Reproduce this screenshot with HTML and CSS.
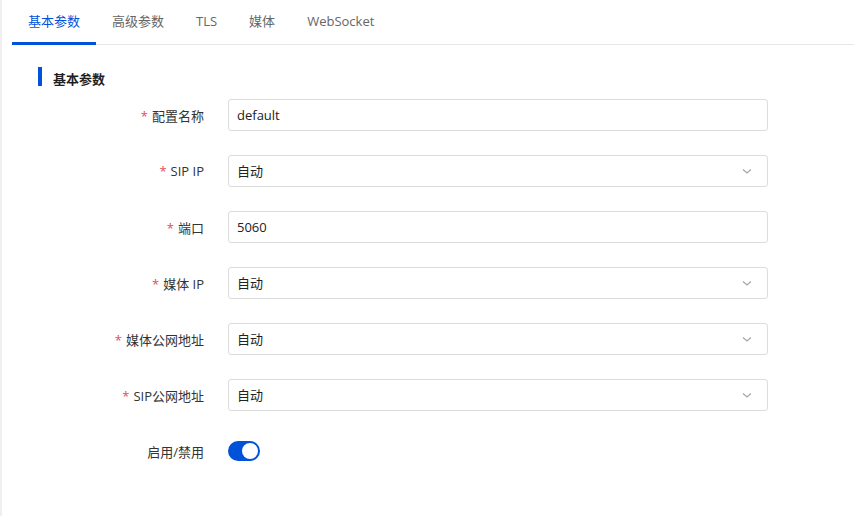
FILE: index.html
```html
<!DOCTYPE html>
<html lang="zh-CN">
<head>
    <meta charset="UTF-8">
    <title>SIP 配置</title>
    <link rel="stylesheet" href="styles.css">
</head>
<body>

<div class="page">
    <!-- Tabs -->
    <div class="tabs">
        <div class="tab active">基本参数</div>
        <div class="tab">高级参数</div>
        <div class="tab">TLS</div>
        <div class="tab">媒体</div>
        <div class="tab">WebSocket</div>
    </div>

    <div class="section">
        <div class="section-title"><span>基本参数</span></div>

        <div class="form">
            <div class="row">
                <label class="label"><span class="req">*</span>配置名称</label>
                <div class="field"><div class="input">default</div></div>
            </div>
            <div class="row">
                <label class="label"><span class="req">*</span>SIP IP</label>
                <div class="field">
                    <div class="input select">自动
                        <svg class="arrow" width="12" height="12" viewBox="0 0 12 12"><path d="M2 4.5 L6 8 L10 4.5" fill="none" stroke="#a6a6a6" stroke-width="1.2"/></svg>
                    </div>
                </div>
            </div>
            <div class="row">
                <label class="label"><span class="req">*</span>端口</label>
                <div class="field"><div class="input">5060</div></div>
            </div>
            <div class="row">
                <label class="label"><span class="req">*</span>媒体 IP</label>
                <div class="field">
                    <div class="input select">自动
                        <svg class="arrow" width="12" height="12" viewBox="0 0 12 12"><path d="M2 4.5 L6 8 L10 4.5" fill="none" stroke="#a6a6a6" stroke-width="1.2"/></svg>
                    </div>
                </div>
            </div>
            <div class="row">
                <label class="label"><span class="req">*</span>媒体公网地址</label>
                <div class="field">
                    <div class="input select">自动
                        <svg class="arrow" width="12" height="12" viewBox="0 0 12 12"><path d="M2 4.5 L6 8 L10 4.5" fill="none" stroke="#a6a6a6" stroke-width="1.2"/></svg>
                    </div>
                </div>
            </div>
            <div class="row">
                <label class="label"><span class="req">*</span>SIP公网地址</label>
                <div class="field">
                    <div class="input select">自动
                        <svg class="arrow" width="12" height="12" viewBox="0 0 12 12"><path d="M2 4.5 L6 8 L10 4.5" fill="none" stroke="#a6a6a6" stroke-width="1.2"/></svg>
                    </div>
                </div>
            </div>
            <div class="row">
                <label class="label">启用/禁用</label>
                <div class="field">
                    <div class="switch on"><span class="knob"></span></div>
                </div>
            </div>
        </div>
    </div>
</div>

</body>
</html>
```

FILE: styles.css
```css
body {
    margin: 0;
    padding: 0;
    font-family: "Open Sans", "Noto Sans CJK SC", sans-serif;
    font-size: 13px;
    color: #222;
    background: #ffffff;
}
.page {
    border-left: 2px solid #efefef;
    min-height: 516px;
    box-sizing: border-box;
}
.tabs {
    display: flex;
    margin-left: 10px;
    height: 44px;
    border-bottom: 1px solid #e7e7e7;
}
.tab {
    position: relative;
    padding: 0 16px;
    line-height: 42px;
    color: #666;
    cursor: pointer;
}
.tab.active {
    color: #0052d9;
}
.tab.active::after {
    content: "";
    position: absolute;
    left: 0;
    right: 0;
    bottom: -1px;
    height: 3px;
    background: #0052d9;
}
.section {
    padding: 22px 0 0 36px;
}
.section-title {
    display: flex;
    align-items: center;
    border-left: 4px solid #0052d9;
    padding-left: 11px;
    height: 19px;
    font-weight: bold;
    color: #1f1f1f;
}
.section-title span {
    padding-top: 3px;
}
.form {
    margin-top: 13px;
    display: flex;
    flex-direction: column;
    gap: 24px;
}
.row {
    display: flex;
    align-items: center;
    height: 32px;
}
.label {
    width: 190px;
    padding-right: 24px;
    box-sizing: border-box;
    text-align: right;
    color: #333;
}
.req {
    color: #e34d59;
    margin-right: 4px;
}
.field {
    width: 540px;
}
.input {
    position: relative;
    height: 32px;
    line-height: 30px;
    box-sizing: border-box;
    border: 1px solid #dcdcdc;
    border-radius: 3px;
    padding: 0 8px;
    color: #222;
}
.select .arrow {
    position: absolute;
    right: 14px;
    top: 9px;
}
.switch {
    position: relative;
    width: 32px;
    height: 20px;
    border-radius: 10px;
    background: #c5c5c5;
}
.switch.on {
    background: #0052d9;
}
.knob {
    position: absolute;
    top: 2px;
    left: 2px;
    width: 16px;
    height: 16px;
    border-radius: 50%;
    background: #fff;
}
.switch.on .knob {
    left: 14px;
}
```
